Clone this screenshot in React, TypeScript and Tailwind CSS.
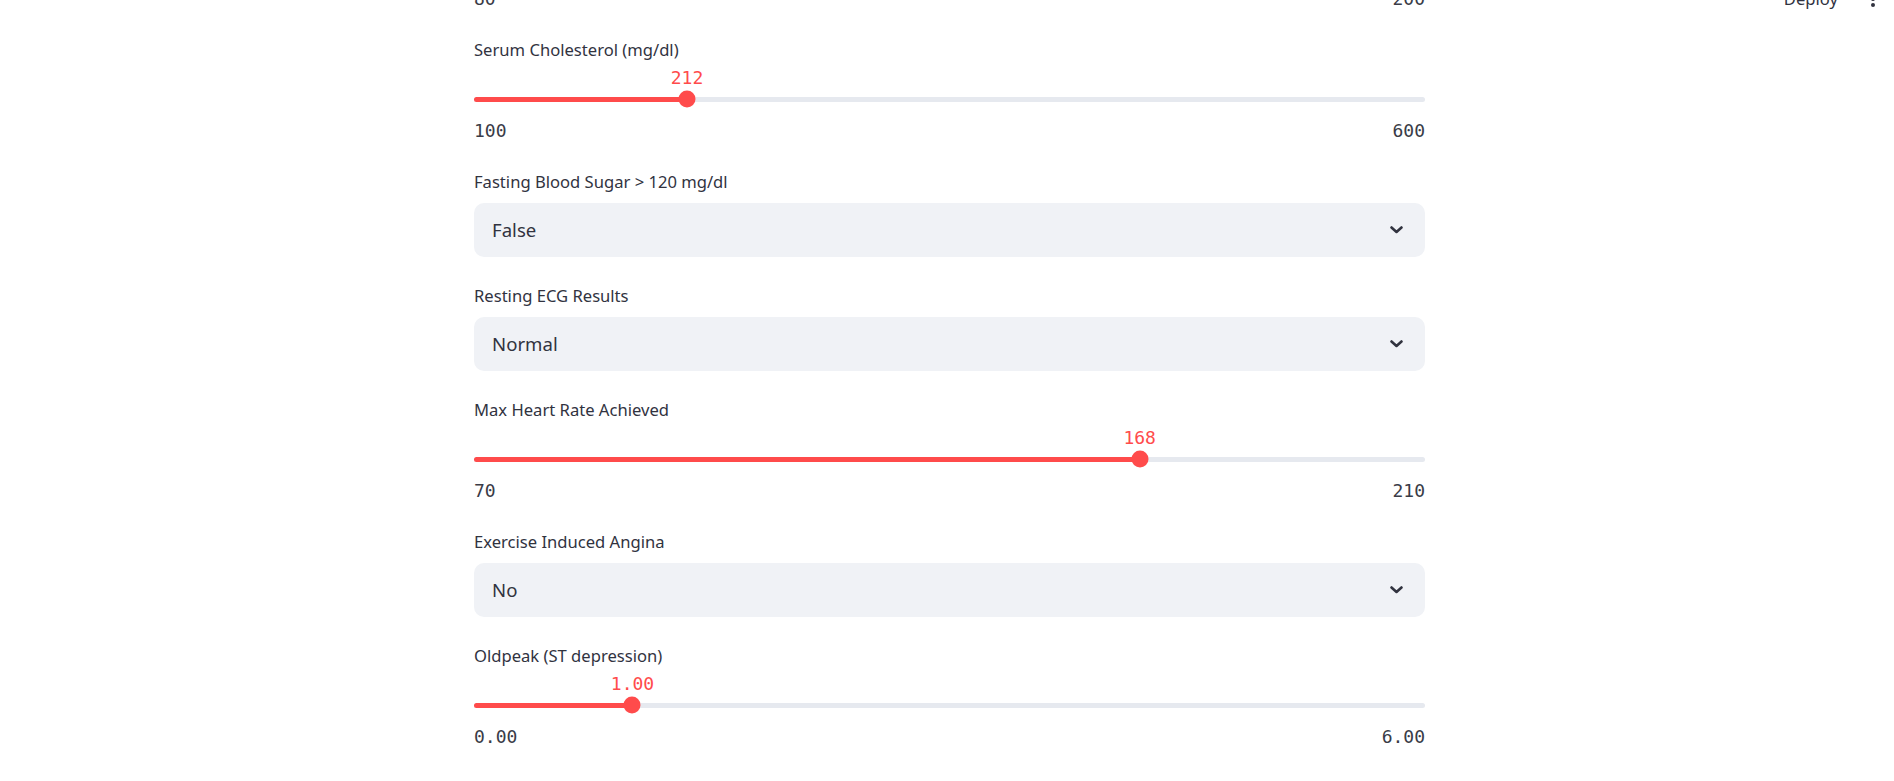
import { FunctionComponent } from "react";

interface ISlider {
    label: string
    value: number
    min: number
    max: number
    digits?: number
}

interface ISelect {
    label: string
    value: string
}

const sans = "font-['Noto_Sans','Source_Sans_Pro',sans-serif]";
const labelCls = `h-6 flex items-center text-[16.6px] text-[#31333f] ${sans}`;
const monoCls = "font-['DejaVu_Sans_Mono',monospace] text-[18px]";

const Slider: FunctionComponent<ISlider> = ({ label, value, min, max, digits = 0 }) => {
    const pct = ((value - min) / (max - min)) * 100;
    return (
        <div className="flex flex-col h-[106px]">
            <div className={labelCls}>{label}</div>
            <div className="relative h-6 mt-1">
                <span
                    style={{ left: `${pct}%` }}
                    className={`absolute top-0 -translate-x-1/2 leading-6 text-[#ff4b4b] ${monoCls}`}
                >
                    {value.toFixed(digits)}
                </span>
            </div>
            <div className="h-[18px] flex items-center">
                <div className="relative w-full h-[5px] rounded-full bg-[#e6e9ef]">
                    <div style={{ width: `${pct}%` }} className="h-full rounded-full bg-[#ff4b4b]" />
                    <div
                        style={{ left: `${pct}%` }}
                        className="absolute top-1/2 w-[17px] h-[17px] -translate-x-1/2 -translate-y-1/2 rounded-full bg-[#ff4b4b]"
                    />
                </div>
            </div>
            <div className={`mt-[10px] h-6 flex justify-between items-center text-[#3a3c47] ${monoCls}`}>
                <span>{min.toFixed(digits)}</span>
                <span>{max.toFixed(digits)}</span>
            </div>
        </div>
    )
}

const Select: FunctionComponent<ISelect> = ({ label, value }) => {
    return (
        <div className="flex flex-col h-[88px]">
            <div className={labelCls}>{label}</div>
            <div className="mt-[9px] h-[54px] rounded-[10px] bg-[#f0f2f6] flex items-center justify-between pl-[18px] pr-[22px]">
                <span className={`text-[18.6px] text-[#31333f] ${sans}`}>{value}</span>
                <svg width="13" height="8" viewBox="0 0 13 8" fill="none">
                    <path d="M1.5 1.5 L6.5 6 L11.5 1.5" stroke="#31333f" strokeWidth="2.6" strokeLinecap="round" strokeLinejoin="round" />
                </svg>
            </div>
        </div>
    )
}

export default function App() {
    return (
        <div className="relative h-[781px] w-full overflow-hidden bg-white">
            <div className={`absolute top-[-11px] right-[56px] text-[16.6px] leading-[20px] text-[#31333f] ${sans}`}>
                Deploy
            </div>
            <svg className="absolute top-[-10px] right-[18px]" width="6" height="18" viewBox="0 0 6 18">
                <circle cx="3" cy="3" r="2" fill="#31333f" />
                <circle cx="3" cy="9" r="2" fill="#31333f" />
                <circle cx="3" cy="15" r="2" fill="#31333f" />
            </svg>

            <div className="mx-auto w-[956px] pl-[5px] -mt-[94px] flex flex-col gap-[26px]">
                <Slider label="Resting Blood Pressure (mm Hg)" value={120} min={80} max={200} />
                <Slider label="Serum Cholesterol (mg/dl)" value={212} min={100} max={600} />
                <Select label="Fasting Blood Sugar > 120 mg/dl" value="False" />
                <Select label="Resting ECG Results" value="Normal" />
                <Slider label="Max Heart Rate Achieved" value={168} min={70} max={210} />
                <Select label="Exercise Induced Angina" value="No" />
                <Slider label="Oldpeak (ST depression)" value={1} min={0} max={6} digits={2} />
                <Select label="Slope of Peak Exercise ST Segment" value="Flat" />
            </div>
        </div>
    )
}
